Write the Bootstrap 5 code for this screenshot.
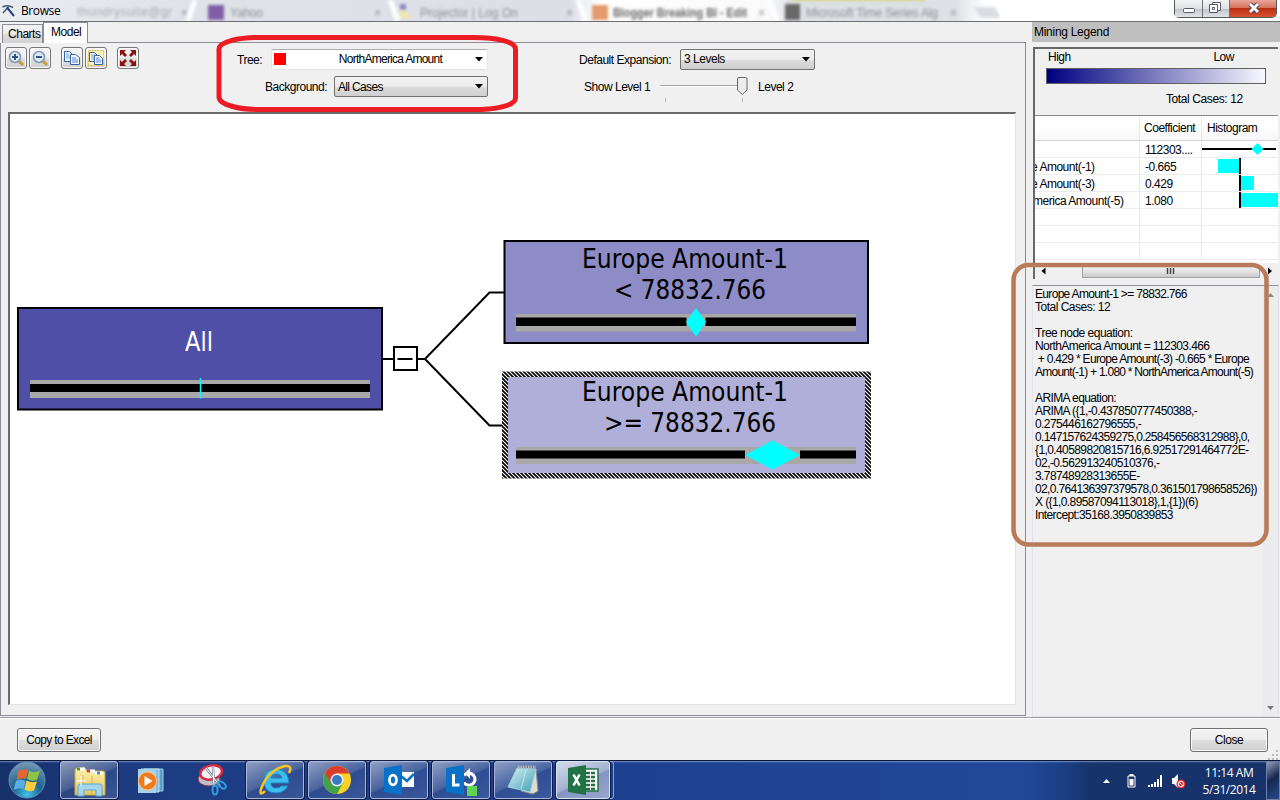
<!DOCTYPE html>
<html lang="en">
<head>
<meta charset="utf-8">
<meta name="viewport" content="width=device-width, initial-scale=1">
<title>Browse</title>
<link href="https://cdn.jsdelivr.net/npm/bootstrap@5.3.0/dist/css/bootstrap.min.css" rel="stylesheet">
<script src="https://cdn.jsdelivr.net/npm/bootstrap@5.3.0/dist/js/bootstrap.bundle.min.js"></script>
<style>
body{width:1280px;height:800px;background:#f0f0f0;color:#000;font:12px/13px "Liberation Sans",sans-serif;letter-spacing:-.48px;white-space:nowrap}
svg{display:block;flex:none}
.titlebar{height:22px;border-bottom:1px solid #6e6e72;background:linear-gradient(90deg,#e9edf1 0,#dfe3e9 190px,#dce0e6 570px,#fff 600px,#fafafa 770px,#dde0e4 790px,#dde0e4 955px,#fff 985px,#fff)}
.app-title{font:12px/21px "Open Sans",sans-serif;width:60px;letter-spacing:-.4px;margin-left:-1px;margin-right:1px}
.win-btns{height:18px;margin-right:3px;border:1px solid #55585f;border-top:0;border-radius:0 0 5px 5px}
.win-btns>div{background:linear-gradient(#f3f4f5,#dfe1e3 50%,#bfc3c8 51%,#e1e4e8);border-right:1px solid #6c7078;height:17px}
.win-btns>.x{background:linear-gradient(#e9a698,#d7735f 45%,#bd2d10 50%,#d4532e);border:0;border-radius:0 0 4px 0}
.main-area{height:695px}
.left-pane{width:1026px}
.tabs{height:21px}
.tab-off{width:41px;height:19px;margin-left:2px;border:1px solid #8d8c97;border-bottom:0;background:linear-gradient(#f3f3f3,#ebebeb 50%,#dcdcdc 51%,#d2d2d2);padding:3px 0 0 5px}
.tab-on{width:45px;height:21px;border:1px solid #8d8c97;border-bottom:0;background:#fff;padding:3px 0 0 7px}
.tabs .rule{height:1px;background:#8d8c97}
.page{height:673px;border:1px solid #8d8c97;border-top:0}
.tools{height:69px}
.tool{width:22px;height:22px;border:1px solid #777;border-radius:3px;background:linear-gradient(#f5f5f5,#ececec 50%,#dedede 51%,#d0d0d0);box-shadow:inset 0 0 0 1px #fafafa}
.drop{border:1px solid #707070;border-radius:2px;background:linear-gradient(#f3f3f3,#ececec 50%,#dcdcdc 51%,#cfcfcf);height:21px;padding:0 3px 0 3px}
.drop.flat{background:#fff;border-color:#abadb3 #e2e5ee #e2e5ee;}
.sw{width:12px;height:12px;background:#f00}
.canvas{width:1008px;height:593px;margin-left:7px;background:#fff;border:solid #696969;border-width:2px 1px 1px 2px;border-right-color:#e3e3e3;border-bottom-color:#e3e3e3}
.right-pane{width:248px}
.legend-head{height:20px;background:#bfbfbf;padding:4px 0 0 2px;letter-spacing:-.28px}
.legend-box{margin:5px 2px 0 1px;height:232px;border:solid #696969;border-width:2px 0 0 2px}
.grad{width:220px;height:16px;margin-left:11px;border:1px solid #606060;background:linear-gradient(90deg,#000080,#f8f8ff)}
.grid-head{height:25px;background:linear-gradient(#fff,#fff 45%,#f5f6f8);border-bottom:1px solid #d5d5d5}
.grid-row{height:17px;border-bottom:1px solid #ececec;line-height:18px}
.c1{width:105px;border-right:1px solid #e8e8e8;overflow:hidden}
.c2{width:62px;border-right:1px solid #e8e8e8;padding-left:5px}
.hbar{height:16px;background:#f0f0f0}
.thumb{width:178px;height:13px;border:1px solid #a0a0a0;background:linear-gradient(#f2f2f2,#e4e4e4 50%,#cbcbcb)}
.info{height:432px;margin:6px 1px 0 0;border:1px solid #e2e3ea;border-top-color:#8f919a}
.info-text{width:230px;padding:2px 0 0 2px;white-space:pre;letter-spacing:-.6px}
.vbar{width:15px;background:#ececec;margin-left:auto}
.foot{height:43px;border-top:1px solid #9d9d9d;box-shadow:inset 0 1px #fff}
.push{border:1px solid #707070;border-radius:3px;background:linear-gradient(#f4f4f4,#ededed 50%,#dedede 51%,#d0d0d0);height:24px;box-shadow:inset 0 0 0 1px #fafafa}
.taskbar{height:40px;border-top:1px solid #0b1836;background:linear-gradient(rgba(190,210,245,.55) 0,transparent 2px),linear-gradient(90deg,#16306a,#1c3b81 120px,#1d3f8c 500px,#204897 1020px,#1b4088 1060px,#17336b 1090px,#16326b)}
.task{width:58px;height:38px;margin-right:4px;border-radius:3px}
.task.open{border:1px solid #a9b6d6;box-shadow:0 0 0 1px #101f4a;background:linear-gradient(155deg,rgba(255,255,255,.5),rgba(255,255,255,.2) 48%,rgba(255,255,255,.08) 52%,rgba(255,255,255,.13))}
.task.front{background:linear-gradient(155deg,#d3daec,#a6b2d3 50%,#8595c2 54%,#98a6cf);width:54px;border-color:#dde3f0}
.clock{font:12px/17px "Open Sans",sans-serif;color:#fff;text-align:center;letter-spacing:-.45px}
.over{pointer-events:none}
</style>
</head>
<body class="m-0 overflow-hidden position-relative d-flex flex-column">

<header class="titlebar d-flex">
  <svg width="22" height="21"><path d="M2.500 7Q8 4.500 13 7.500M3 13L9 6" fill="none" stroke="#46586e" stroke-width="1.500"/><path d="M7 7.500L14 16" stroke="#27457a" stroke-width="2"/></svg>
  <span class="app-title">Browse</span>
  <svg width="928" height="21" viewBox="72 0 928 21" font-family="Liberation Sans" font-size="12" class="me-auto" style="margin-left:-10px;letter-spacing:0">
    <defs><filter id="soft" x="-10%" y="-50%" width="120%" height="200%"><feGaussianBlur stdDeviation="1.7"/></filter></defs>
    <g filter="url(#soft)" fill="#8b8e94">
      <path d="M195 0l-7 21M390 0l8 21M578 0l8 21M768 0l10 21" stroke="#fff" stroke-width="5"/>
      <text x="77" y="16" textLength="95" fill="#a5a8ad">thundrysuite@gr</text><text x="181" y="17">×</text>
      <rect x="208" y="5" width="16" height="15" fill="#805da5"/><text x="230" y="17" textLength="33">Yahoo</text><text x="374" y="17">×</text>
      <path d="M400 6l12 12h-12z" fill="#f2e6a8"/><path d="M400 4h6v6h-6z" fill="#8c84c4"/><text x="420" y="17" textLength="98">Projector | Log On</text><text x="566" y="17">×</text>
      <rect x="592" y="5" width="16" height="15" fill="#e39a6c"/><text x="613" y="17" textLength="134" lengthAdjust="spacingAndGlyphs" font-weight="bold" fill="#666">Blogger Breaking BI - Edit</text><text x="758" y="17">×</text>
      <rect x="785" y="4" width="15" height="16" fill="#686868"/><text x="806" y="17" textLength="132">Microsoft Time Series Alg</text><text x="950" y="17">×</text>
      <path d="M792-1h133" stroke="#d6d06a" stroke-width="3"/><path d="M973 7h22l6 11h-20z" fill="#d9dde2"/>
    </g>
  </svg>
  <div class="win-btns d-flex">
    <div><svg width="27" height="17"><rect x="8.500" y="8.500" width="11" height="4" rx="1" fill="#fff" stroke="#555a68"/></svg></div>
    <div><svg width="26" height="17" fill="#fff" stroke="#555a68"><path d="M9.500 2.500h8v8h-8z"/><path d="M6.500 4.500h8v8h-8z"/><path d="M9.500 7.500h2v2h-2z"/></svg></div>
    <div class="x"><svg width="46" height="17"><path d="M20 4l8 8M28 4l-8 8" stroke="#554b5c" stroke-width="5"/><path d="M20 4l8 8M28 4l-8 8" stroke="#fff" stroke-width="2.800"/></svg></div>
  </div>
</header>

<main class="main-area d-flex">
  <section class="left-pane">
    <div class="tabs d-flex align-items-end">
      <div class="tab-off">Charts</div><div class="tab-on">Model</div><div class="rule flex-grow-1"></div>
    </div>
    <div class="page">
      <div class="tools d-flex">
        <div class="d-flex pt-1 ps-1" style="width:218px">
          <div class="tool"><svg width="20" height="20"><path d="M12 12l5 5" stroke="#c79b3b" stroke-width="3"/><circle cx="9" cy="9" r="5.500" fill="#d9ebfa" stroke="#7f96b3" stroke-width="1.500"/><path d="M6 9h6M9 6v6" stroke="#38537c" stroke-width="2"/></svg></div>
          <div class="tool" style="margin-left:2px"><svg width="20" height="20"><path d="M12 12l5 5" stroke="#c79b3b" stroke-width="3"/><circle cx="9" cy="9" r="5.500" fill="#d9ebfa" stroke="#7f96b3" stroke-width="1.500"/><path d="M6 9h6" stroke="#38537c" stroke-width="2"/></svg></div>
          <div class="tool" style="margin-left:10px"><svg width="20" height="20" stroke="#3564a8" fill="#f4f8ff"><path d="M2.500 3.500h5l3 3v7h-8z"/><path d="M4 6h3M4 8h4M4 10h4" stroke="#79a0d8"/><path d="M8.500 6.500h5l4 3v7h-9z"/><path d="M10 10h4M10 12h6M10 14h6" stroke="#5585cc"/></svg></div>
          <div class="tool" style="margin-left:2px"><svg width="20" height="20" stroke="#3564a8" fill="#f4f8ff"><rect x="2.500" y="2.500" width="15" height="15" fill="#fbf0b5" stroke="#e5bd3e" stroke-dasharray="2 1"/><path d="M3.500 4.500h5l3 3v6h-8z"/><path d="M5 7h4M5 9h4M5 11h4" stroke="#79a0d8"/><path d="M8.500 7.500h5l3 3v6h-8z"/><path d="M10 10h3M10 12h5M10 14h5" stroke="#5585cc"/></svg></div>
          <div class="tool" style="margin-left:10px"><svg width="20" height="20" fill="#8a1010"><path d="M2 2h6l-2 2 3 3-2 2-3-3-2 2zM18 2v6l-2-2-3 3-2-2 3-3-2-2zM2 18v-6l2 2 3-3 2 2-3 3 2 2zM18 18h-6l2-2-3-3 2-2 3 3 2-2z"/></svg></div>
        </div>
        <div class="pt-1" style="width:270px">
          <div class="d-flex align-items-center" style="height:24px"><span style="width:52px;padding-left:18px;margin-top:2px">Tree:</span>
            <div class="drop flat d-flex align-items-center" style="width:217px;padding-left:2px"><i class="sw"></i><span class="ms-auto" style="margin-right:33px;letter-spacing:-.75px">NorthAmerica Amount</span><svg width="9" height="5"><path d="M0 0h8L4 4.500z"/></svg></div></div>
          <div class="d-flex align-items-center" style="height:31px"><span style="width:115px;padding-left:46px;margin-top:2px">Background:</span>
            <div class="drop d-flex align-items-center justify-content-between" style="width:154px"><span style="letter-spacing:-.65px;margin-top:1px">All Cases</span><svg width="9" height="5"><path d="M0 0h8L4 4.500z"/></svg></div></div>
        </div>
        <div class="pt-1" style="margin-left:90px">
          <div class="d-flex align-items-center" style="height:24px"><span style="width:101px;margin-top:2px">Default Expansion:</span>
            <div class="drop d-flex align-items-center justify-content-between" style="width:135px"><span>3 Levels</span><svg width="9" height="5"><path d="M0 0h8L4 4.500z"/></svg></div></div>
          <div class="d-flex align-items-center" style="height:31px"><span style="width:79px;padding-left:5px;margin-top:2px">Show Level 1</span>
            <svg width="92" height="31"><path d="M2 14.500h80" stroke="#a4a4a4"/><path d="M2 15.500h80" stroke="#fff"/><path d="M7.500 27v4M84.500 27v4" stroke="#b8b8b8"/><path d="M79.500 8q0-1.500 1.500-1.500h6.500q1.500 0 1.500 1.500v11l-4.700 4.500-4.800-4.500z" fill="#ececec" stroke="#686868"/></svg>
            <span style="padding-left:8px;margin-top:2px">Level 2</span></div>
        </div>
      </div>
      <div class="canvas">
        <svg width="1005" height="590" viewBox="10 114 1005 590" font-family="'DejaVu Sans Condensed','DejaVu Sans',sans-serif" font-size="26" style="letter-spacing:0">
          <defs><pattern id="hatch" width="4" height="4" patternUnits="userSpaceOnUse"><rect width="4" height="4" fill="#fff"/><path d="M-1-1l6 6M-1 3l2 2M3-1l2 2" stroke="#000" stroke-width="1.700"/></pattern></defs>
          <g fill="none" stroke="#000" stroke-width="2"><path d="M382 359h11M417 359h8L489.500 292.500H504M425 359l64.500 66.500H504"/><path d="M394 347h23v23h-23zM397.500 359h15"/></g>
          <rect x="18" y="308" width="364" height="101.500" fill="#504fa7" stroke="#000" stroke-width="2"/>
          <text x="185" y="351" textLength="28" lengthAdjust="spacingAndGlyphs" fill="#fff">All</text>
          <path d="M30 380h340v18H30z" fill="#a8a8a8"/><path d="M30 384h340v8H30z"/><path d="M200.500 378v20.500" stroke="#0ff" stroke-width="1.500"/>
          <rect x="504.500" y="241" width="363.500" height="102" fill="#8d8cc6" stroke="#000" stroke-width="2"/>
          <text x="582" y="267.500" textLength="206" lengthAdjust="spacingAndGlyphs">Europe Amount-1</text><text x="614" y="298.500" textLength="152" lengthAdjust="spacingAndGlyphs">&lt; 78832.766</text>
          <path d="M516 314h340v17.500H516z" fill="#a8a8a8"/><path d="M516 317.500h340v8.500H516z"/><path d="M686.500 317h19v10h-19z" fill="#a8a8a8"/><path d="M696 308l10 14-10 14.500-10-14.500z" fill="#0ff"/>
          <rect x="502" y="371.500" width="369" height="107" fill="url(#hatch)"/><rect x="508" y="377" width="357" height="96" fill="#b0afd9"/>
          <text x="582" y="400.500" textLength="206" lengthAdjust="spacingAndGlyphs">Europe Amount-1</text><text x="604" y="431.500" textLength="172" lengthAdjust="spacingAndGlyphs">&gt;= 78832.766</text>
          <path d="M516 447h340v17H516z" fill="#a8a8a8"/><path d="M516 450.500h229v8H516zM800 450.500h56v8h-56z"/><path d="M745 455l27.500-14.500L800 455l-27.500 14.500z" fill="#0ff"/>
        </svg>
      </div>
    </div>
  </section>

  <aside class="right-pane ms-auto">
    <div class="legend-head">Mining Legend</div>
    <div class="legend-box">
      <div style="height:66px">
        <div class="d-flex justify-content-between" style="padding:2px 44px 4px 13px"><span>High</span><span>Low</span></div>
        <div class="grad"></div>
        <div style="padding:9px 0 0 131px;letter-spacing:-.4px">Total Cases: 12</div>
      </div>
      <div class="bg-white" style="height:148px;border-top:1px solid #8a8a90">
        <div class="grid-head d-flex align-items-center"><div class="c1 h-100"></div><div class="c2 h-100 d-flex align-items-center" style="padding-left:4px">Coefficient</div><div style="padding-left:5px">Histogram</div></div>
        <div class="grid-row d-flex"><div class="c1"></div><div class="c2">112303....</div><svg width="76" height="16"><path d="M0 8h74" stroke="#000" stroke-width="2"/><path d="M55.500 2l6 6-6 6-6-6z" fill="#0ff"/></svg></div>
        <div class="grid-row d-flex"><div class="c1"><span style="margin-left:-4px">e Amount(-1)</span></div><div class="c2">-0.665</div><svg width="76" height="16"><path d="M16 1h22v14H16z" fill="#0ff"/><path d="M38 0v16" stroke="#000" stroke-width="2"/></svg></div>
        <div class="grid-row d-flex"><div class="c1"><span style="margin-left:-4px">e Amount(-3)</span></div><div class="c2">0.429</div><svg width="76" height="16"><path d="M38 1h14v14H38z" fill="#0ff"/><path d="M38 0v16" stroke="#000" stroke-width="2"/></svg></div>
        <div class="grid-row d-flex"><div class="c1"><span style="margin-left:-2px">merica Amount(-5)</span></div><div class="c2">1.080</div><svg width="76" height="16"><path d="M38 1h38v14H38z" fill="#0ff"/><path d="M38 0v16" stroke="#000" stroke-width="2"/></svg></div>
        <div class="grid-row d-flex"><div class="c1"></div><div class="c2"></div></div>
        <div class="grid-row d-flex"><div class="c1"></div><div class="c2"></div></div>
        <div class="grid-row d-flex"><div class="c1"></div><div class="c2"></div></div>
      </div>
      <div class="hbar d-flex align-items-center">
        <svg width="47" height="14"><path d="M6.500 7l4-3.500v7z"/></svg>
        <div class="thumb"><svg width="176" height="11"><path d="M84.500 2v6M87.500 2v6M90.500 2v6" stroke="#444" stroke-width="1.500"/></svg></div>
        <svg width="18" height="14"><path d="M12 7L8 3.500v7z"/></svg>
      </div>
    </div>
    <div class="info d-flex">
      <div class="info-text"><span style="letter-spacing:-.68px">Europe Amount-1 &gt;= 78832.766</span>
<span style="letter-spacing:-.5px">Total Cases: 12</span>

<span style="letter-spacing:-.5px">Tree node equation:</span>
NorthAmerica Amount = 112303.466
<span style="letter-spacing:-.68px"> + 0.429 * Europe Amount(-3) -0.665 * Europe</span>
<span style="letter-spacing:-.75px">Amount(-1) + 1.080 * NorthAmerica Amount(-5)</span>

ARIMA equation:
ARIMA ({1,-0.437850777450388,-
0.275446162796555,-
<span style="letter-spacing:-.68px">0.147157624359275,0.258456568312988},0,</span>
{1,0.40589820815716,6.92517291464772E-
02,-0.562913240510376,-
3.78748928313655E-
<span style="letter-spacing:-.66px">02,0.764136397379578,0.361501798658526})</span>
X ({1,0.89587094113018},1,{1})(6)
Intercept:35168.3950839853</div>
      <div class="vbar d-flex flex-column justify-content-between"><svg width="15" height="16"><path d="M4 11h7L7.500 7z" fill="#888"/></svg><svg width="15" height="16"><path d="M4 6h7l-3.500 4z" fill="#777"/></svg></div>
    </div>
  </aside>
</main>

<footer class="foot d-flex">
  <div class="push d-flex align-items-center justify-content-center" style="width:84px;margin:10px 0 0 17px;letter-spacing:-.65px">Copy to Excel</div>
  <div class="push d-flex align-items-center justify-content-center ms-auto" style="width:78px;margin-top:10px">Close</div>
  <svg class="align-self-end" width="12" height="13"><path d="M8 3h2v2H8zM4 7h2v2H4zM8 7h2v2H8zM0 11h2v2H0zM4 11h2v2H4zM8 11h2v2H8z" fill="#bbb"/></svg>
</footer>

<nav class="taskbar d-flex">
  <svg width="60" height="39">
    <defs><radialGradient id="orb" cx=".5" cy=".9" r=".9"><stop stop-color="#43c4e8"/><stop offset=".45" stop-color="#1b628f"/><stop offset="1" stop-color="#7b9bb5"/></radialGradient><linearGradient id="fold" x2="0" y2="1"><stop stop-color="#fff0a9"/><stop offset="1" stop-color="#e8c864"/></linearGradient><linearGradient id="pad" x2="1" y2="1"><stop stop-color="#d7f2f4"/><stop offset="1" stop-color="#3f9db5"/></linearGradient></defs>
    <circle cx="27" cy="19" r="18" fill="url(#orb)" stroke="#5d8fb3"/>
    <path d="M18.500 10q5-3 9.500-1l-2 9q-5-2-9.500 1z" fill="#e96430"/><path d="M29 9.500q5 3 11 0l-3 9.500q-5 2-10-1z" fill="#8fc346"/><path d="M16 20q4-3 9.500 0l-2 8q-4-2-10 1z" fill="#5aaee8"/><path d="M26.500 19.500q5 3 10.500 1l-3 9q-5 2-9.500-1z" fill="#fbcb3c"/>
  </svg>
  <div class="task open"><svg width="56" height="36"><path d="M14 8q0-2 2-2h8l2 3h16q2 0 2 2v22H14z" fill="url(#fold)" stroke="#c6a24c"/><path d="M22 13v20M31 14v19" stroke="#d9b95d"/><path d="M16 7h8M26 9h8M34 11h8" stroke="#fff" stroke-width="3"/><path d="M16 7h3" stroke="#3a9b38" stroke-width="3"/><path d="M26 9h3" stroke="#d93a2b" stroke-width="3"/><path d="M36 11h3" stroke="#3d8cd8" stroke-width="3"/><path d="M17 34V24q0-2 2-2h20q2 0 2 2v10h-6v-6H23v6z" fill="#a4d6ee" stroke="#60a6cd"/><path d="M20 14v10M15 19h10" stroke="#fff"/></svg></div>
  <div class="task"><svg width="58" height="38"><path d="M22 8h19v22H22z" fill="#5c9cc6" stroke="#9acae6"/><path d="M19 8h18v23H19z" fill="#85bddf" stroke="#c0e0f2"/><path d="M16 8h18v24H16z" fill="#a6d2ea"/><circle cx="25.500" cy="20" r="9" fill="#ee7a1d" stroke="#ffc382"/><path d="M22.500 15v10l8-5z" fill="#fff"/></svg></div>
  <div class="task"><svg width="58" height="38"><ellipse cx="25" cy="18" rx="11" ry="7" fill="#b9bfcb" stroke="#8b3443"/><ellipse cx="27" cy="11.500" rx="11" ry="7" fill="#f5f5f7" stroke="#da2940" stroke-width="2.500" transform="rotate(-12 27 11)"/><path d="M22 7l14 18M29 6l1 20" stroke="#7d8799" stroke-width="2.500"/><path d="M22 7l14 18M29 6l1 20" stroke="#fff"/><g fill="none" stroke="#2e9edf" stroke-width="2"><ellipse cx="31" cy="29" rx="2.500" ry="4.500"/><ellipse cx="38" cy="24" rx="2.500" ry="4.500" transform="rotate(-50 38 24)"/></g></svg></div>
  <div class="task open"><svg width="56" height="36"><path d="M41 24q-4 7-12 7-12 0-12-12T29 7q12 0 13 14H24q0 5 5 5 4 0 5-2zM24 16h11q-1-4-5-4-5 0-6 4z" fill="#3dbcf0" fill-rule="evenodd" stroke="#1d85c5"/><path d="M18 29q-6 6-4-2Q21 8 38 4q8-1 4 7" fill="none" stroke="#f6c51f" stroke-width="2.500"/></svg></div>
  <div class="task open"><svg width="56" height="36"><circle cx="28" cy="18" r="14" fill="#fbd123"/><path d="M15.900 11A14 14 0 0 0 28 32l6-11-6-2z" fill="#3ea34b"/><path d="M28 11.500h12.400a14 14 0 0 0-24.500-.500l6 10z" fill="#dc3c2d"/><circle cx="28" cy="18" r="6.500" fill="#f5f5f5"/><circle cx="28" cy="18" r="5" fill="#357bc4"/></svg></div>
  <div class="task open"><svg width="56" height="36"><path d="M30 10h13v15H30z" fill="#fff"/><path d="M30 14l6 5 7-7" fill="none" stroke="#0a70c4" stroke-width="2.500"/><path d="M13 6l18-3v30l-18-3z" fill="#0971c6"/><ellipse cx="22" cy="18" rx="3.500" ry="4.800" fill="none" stroke="#fff" stroke-width="2.800"/></svg></div>
  <div class="task open"><svg width="56" height="36"><path d="M31 13q3-2 6-1.500h1a6 6 0 1 1-7 9" fill="none" stroke="#fff" stroke-width="3"/><path d="M32 11l5-5v11z" fill="#fff"/><path d="M13 6l18-3v30l-18-3z" fill="#0971c6"/><path d="M20.500 12v11h6" fill="none" stroke="#fff" stroke-width="3"/><path d="M34 24h10v10H34z" fill="#62d455"/></svg></div>
  <div class="task open"><svg width="56" height="36"><path d="M41 7l2 22-5 3-12-3z" fill="#dedbd2" stroke="#8c8b83"/><path d="M22 6l19 1-6 23-22-5z" fill="url(#pad)" stroke="#9dd0d8"/><path d="M31 8l-5 19" stroke="#e4f8f8" opacity=".6"/><path d="M23 5h18" stroke="#b6b6ad" stroke-width="3" stroke-dasharray="1.500 1"/></svg></div>
  <div class="task open front me-0"><svg width="52" height="36"><path d="M28 7h13v22H28z" fill="#fff" stroke="#217346" stroke-width="1.500"/><path d="M29 11h10M29 15h10M29 19h10M29 23h10M29 27h10" stroke="#217346" stroke-width="2.500" stroke-dasharray="4 1"/><path d="M11 6l18-3v30l-18-3z" fill="#217346"/><path d="M16.500 12.500l6 11M22.500 12.500l-6 11" stroke="#fff" stroke-width="2.500"/></svg></div>
  <div style="width:4px;height:38px;border:1px solid #8d9dc8;border-left:0;border-radius:0 3px 3px 0"></div>
  <svg class="ms-auto" width="100" height="39"><g fill="#fff"><path d="M3 22h7l-3.500-4z"/><path d="M48 24h2v2h-2zM51 23h2v3h-2zM54 21h2v5h-2zM57 18h2v8h-2zM60 14h2v12h-2z"/><path d="M72 17h2l4-4v14l-4-4h-2z"/></g><path d="M28 15h7v11h-7z" fill="none" stroke="#fff"/><path d="M29.500 13h4v2h-4zM29.500 18h4v6.500h-4z" fill="#fff"/><circle cx="81" cy="23" r="4.500" fill="#e4252b"/><circle cx="81" cy="23" r="2.800" fill="none" stroke="#fff"/><path d="M79 21l4 4" stroke="#fff"/></svg>
  <div class="clock" style="width:58px;padding-top:3px">11:14 AM<br>5/31/2014</div>
  <div style="width:14px;height:39px;margin-left:8px;border:1px solid #6d7fa8;background:linear-gradient(145deg,#93a0bd,#15284e 45%,#27498e)"></div>
</nav>

<svg class="over position-absolute top-0 start-0" width="1280" height="800" fill="none">
  <path d="M258 37.500H473C498 37.500 515.500 42 515.500 49V98C515.500 105 498 109 482 109.500H258C240 109.500 219 105 219 97V49C219 42 238 37.500 258 37.500z" stroke="#ed1c24" stroke-width="5"/>
  <rect x="1013.500" y="265" width="253" height="279.500" rx="15" stroke="#b97a57" stroke-width="4.500"/>
</svg>
</body>
</html>
